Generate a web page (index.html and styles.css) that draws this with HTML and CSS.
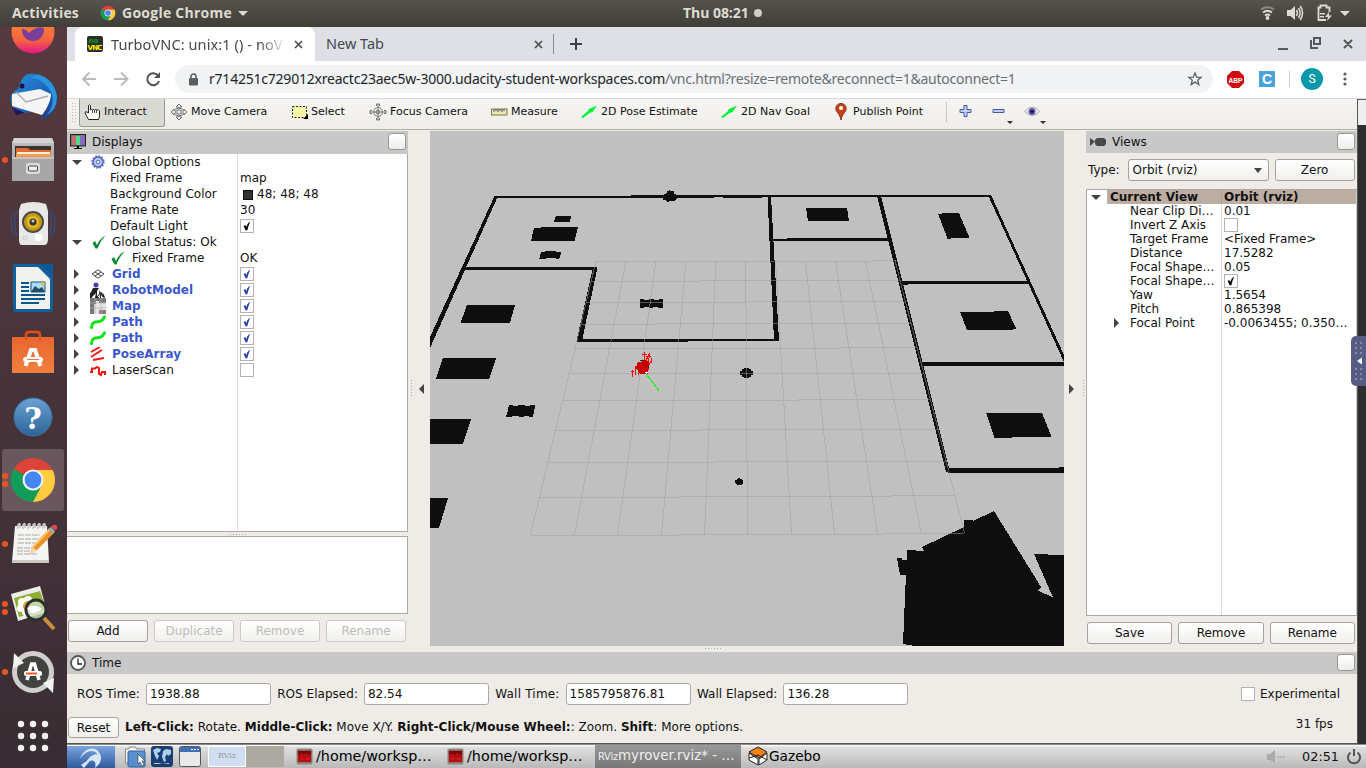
FILE: index.html
```html
<!DOCTYPE html>
<html lang="en">
<head>
<meta charset="utf-8">
<title>TurboVNC: unix:1 () - noVNC</title>
<link rel="stylesheet" href="styles.css">
</head>
<body>
<svg class="defs" width="0" height="0">
  <defs>
    <linearGradient id="gGrey" x1="0" y1="0" x2="0" y2="1"><stop offset="0" stop-color="#c4c4c4"/><stop offset="1" stop-color="#8d8d8d"/></linearGradient>
    <linearGradient id="gOrange" x1="0" y1="0" x2="0" y2="1"><stop offset="0" stop-color="#e9662f"/><stop offset="1" stop-color="#f08040"/></linearGradient>
    <linearGradient id="gBlue" x1="0" y1="0" x2="0" y2="1"><stop offset="0" stop-color="#6ba3d6"/><stop offset="1" stop-color="#2d6396"/></linearGradient>
    <linearGradient id="gFire" x1="0" y1="0" x2="0" y2="1"><stop offset="0" stop-color="#ff9a30"/><stop offset=".7" stop-color="#f5623f"/><stop offset="1" stop-color="#e3148c"/></linearGradient>
    <linearGradient id="gBird" x1="0" y1="0" x2="1" y2="1"><stop offset="0" stop-color="#2a8fe0"/><stop offset=".6" stop-color="#1a62b8"/><stop offset="1" stop-color="#1f2f80"/></linearGradient>
    <symbol id="chrome" viewBox="0 0 48 48">
      <circle cx="24" cy="24" r="22" fill="#dd4437"/>
      <path d="M24 24 L4.9 13 A22 22 0 0 0 24 46 L33.5 29.5Z" fill="#119d58"/>
      <path d="M24 14 H43.6 A22 22 0 0 1 24 46 L33 29Z" fill="#fecd40"/>
      <circle cx="24" cy="24" r="10.5" fill="#f1f1f1"/><circle cx="24" cy="24" r="8.4" fill="#4486f4"/>
    </symbol>
    <symbol id="arrow3d" viewBox="0 0 16 16"><path d="M0 13 L6.500 7.500 L8 5 L16 1.500 L11.500 8 L8.500 9 L2 14Z" fill="#00f03c"/></symbol>
    <symbol id="check" viewBox="0 0 14 14"><path d="M3 6.800 L5 6 L6.200 8 C7 5.500 8.500 2.500 10.800 2 C9.300 5 8 8.500 7.500 12 L5.300 12Z" fill="currentColor"/></symbol>
    <symbol id="tick" viewBox="0 0 14 14"><path d="M.5 8 L3 6 L5 10 C7 5.500 10 2 13.500 .5 C10 4.500 7 9 5.500 13.500 L3.500 13.500Z" fill="#0b8a2f"/></symbol>
    <symbol id="path" viewBox="0 0 16 14"><path d="M1.500 12.500 C1.500 8 4 7 7.500 6.800 C11 6.500 13 5 14.500 1.800" fill="none" stroke="#0be31b" stroke-width="3" stroke-linecap="round"/></symbol>
    <symbol id="term" viewBox="0 0 18 18"><rect x=".5" y=".5" width="17" height="17" rx="2" fill="#8c8783"/><rect x="2" y="3" width="14" height="12" fill="#b80d10"/><path d="M2 3h14v4H2z" fill="#7c0508"/><path d="M5 6h2v1H5zM10 6h2v1h-2zM5 11h2v1H5zM11 11h3v1h-3z" fill="#f04840"/></symbol>
  </defs>
</svg>

<header class="topbar">
  <span class="activities">Activities</span>
  <svg class="tb-chrome" width="16" height="16"><use href="#chrome"/></svg>
  <span class="appname">Google Chrome</span>
  <i class="caret light"></i>
  <span class="clock">Thu 08:21</span><i class="clockdot"></i>
  <svg class="tray" width="100" height="26" viewBox="0 0 100 26">
    <g fill="none" stroke="#8a8984" stroke-width="2"><path d="M1 9.500 Q7.500 5 14 9.500"/></g>
    <g fill="none" stroke="#dfdbd2" stroke-width="2"><path d="M3 12.500 Q7.500 9 12 12.500"/><path d="M5 15.500 Q7.500 13.500 10 15.500"/></g>
    <circle cx="7.500" cy="18" r="1.900" fill="#dfdbd2"/>
    <path d="M27 10h3.500l4.500-4v14l-4.500-4H27z" fill="#dfdbd2"/>
    <g fill="none" stroke="#dfdbd2" stroke-width="1.500"><path d="M36.500 10q2 3 0 6M38.500 8q3.300 5 0 10M40.300 6q4.500 7 0 14"/></g>
    <path d="M66 20h-7.500V7.500h2v-2h6v2h3V12" fill="none" stroke="#dfdbd2" stroke-width="1.800"/>
    <path d="M60 13h5v1.500h-5zM60 16h4v1.500h-4zM69 12l-4 5h3l-1 4 5-5.500h-3z" fill="#dfdbd2"/>
    <path d="M80 11h10l-5 5z" fill="#dfdbd2"/>
  </svg>
</header>

<div class="desktop">
<nav class="dock">
  <div class="slot"><svg width="48" height="48"><circle cx="24" cy="24" r="21.500" fill="url(#gFire)"/><circle cx="24" cy="22" r="11" fill="#7b3f9a"/><path d="M11 20q6 1 9 5q8-8 15-5l2-8H10z" fill="#f7753c"/></svg></div>
  <div class="slot"><svg width="48" height="48"><path d="M9 17C12 6 17 1 21 2C35 0 47 12 48 24C48 38 40 47 31 47L38 38L8 42C-2 28 1 21 9 17Z" fill="url(#gBird)"/><path d="M20 5q16 2 23 17q3 10-5 21q10-5 10-18Q45 7 30 3z" fill="#2796dc"/><path d="M3 35l4 8 9-2z" fill="#2a1254"/><path d="M3 22L31 17L42 22C42 28 38 37 33 43L3 34Z" fill="#f5f5f5"/><path d="M7 20l10 10 22-6" fill="none" stroke="#aaa" stroke-width="1.300"/><circle cx="13" cy="14" r="2.500" fill="#214"/></svg></div>
  <div class="slot"><i class="pip"></i><svg width="48" height="48"><path d="M5 2h38l2 5v37q0 1-1 1H4q-1 0-1-1V7z" fill="url(#gGrey)"/><path d="M3 7l2-5h38l2 5z" fill="#d2d2d2"/><path d="M6 10h36v11H6z" fill="#3c3531"/><path d="M7 12h12l2 2h21v8H7z" fill="#e4682a"/><path d="M8 16h33v5H8z" fill="#fff2d8"/><path d="M7 18h35v4H7z" fill="#f39b52"/><path d="M3 21h42v24H3z" fill="#a6a6a6"/><path d="M3 21h42v2H3z" fill="#c4c4c4"/><rect x="17" y="27" width="14" height="11" rx="2.500" fill="#dcdcdc"/><rect x="19.500" y="30" width="9" height="5" rx="1" fill="#eee" stroke="#444"/></svg></div>
  <div class="slot"><svg width="48" height="48"><g fill="none" stroke="#3d4a74"><path d="M5 11q-6 12 0 25M8 11q-5 12 0 25M43 11q6 12 0 25M40 11q5 12 0 25" stroke-width="1.500"/></g><path d="M12 4q12-4 25 0l2 7v28q0 5-3 6H13q-3 0-3-6V10z" fill="#e8e8e6"/><circle cx="24" cy="22" r="11" fill="#4b4b4b"/><circle cx="24" cy="22" r="9" fill="#c59a12"/><circle cx="24" cy="22" r="6" fill="#e4bd28"/><circle cx="24" cy="22" r="3.500" fill="#333"/><circle cx="24" cy="21" r="1.500" fill="#ccc"/><path d="M26 34h7v6q-5 2-7 0z" fill="#fff"/><circle cx="16" cy="38" r="2" fill="none" stroke="#ccc"/></svg></div>
  <div class="slot"><svg width="48" height="48"><path d="M6 0H32L44 12V45q0 3-3 3H7q-3 0-3-3V2q0-2 2-2z" fill="#0f609c"/><path d="M32 0h12v12z" fill="#0a5a98"/><path d="M7 3H29L41 15V45H7z" fill="#f1f1ef"/><path d="M12 19h8M12 23h8M12 27h8M12 31h24M12 35h24M12 39h18" stroke="#0b5788" stroke-width="2"/><path d="M22 18h14v10H22z" fill="#a8dbf5" stroke="#0b5788"/><path d="M22 28l4-6 4 3 3-2 3 5z" fill="#274d66"/><circle cx="34" cy="20" r="2" fill="#e7c04a"/></svg></div>
  <div class="slot"><svg width="48" height="48"><path d="M17 14V7q0-3 3-3h8q3 0 3 3v7" fill="none" stroke="#ba3d12" stroke-width="3"/><path d="M3 9h42v36H3z" fill="url(#gOrange)"/><path d="M17 12V7q0-3 3-3h8q3 0 3 3v5" fill="none" stroke="#d8511e" stroke-width="2"/><path d="M16.500 38L22 22h4l5.500 16" fill="none" stroke="#fff" stroke-width="4"/><rect x="14" y="29" width="20" height="5" rx="2.500" fill="#fff"/><path d="M18 31.500h12" stroke="#ee7136"/></svg></div>
  <div class="slot"><svg width="48" height="48"><circle cx="24" cy="25" r="19" fill="url(#gBlue)" stroke="#3b72a4"/><text x="24" y="37" text-anchor="middle" class="help-q">?</text></svg></div>
  <div class="slot on"><i class="pip"></i><i class="pip"></i><svg width="48" height="48"><use href="#chrome"/></svg></div>
  <div class="slot"><i class="pip"></i><svg width="48" height="48"><path d="M6 6h32l2 36H3z" fill="#f4f4f2"/><path d="M3 40h37v3H3z" fill="#c9c9be"/><g fill="none" stroke="#ccc" stroke-width="1.700"><path d="M9 9V5q2-3 2 0v3M14 9V5q2-3 2 0v3M19 9V5q2-3 2 0v3M24 9V5q2-3 2 0v3M29 9V5q2-3 2 0v3M34 9V5q2-3 2 0v3"/></g><path d="M9 15h22M9 19h22M9 23h20M8 28h17M8 31h13M8 34h20" stroke="#a9a9a9" stroke-dasharray="6 1"/><path d="M21 34l3-8L41 8l5 4-18 18z" fill="#e9912b"/><path d="M24 27L41 9" stroke="#ffc46a" stroke-width="2"/><path d="M39 9l3-2 4 4-3 3z" fill="#9aa"/><path d="M42 7q3-4 6-1q1 3-2 4z" fill="#e5484d"/><path d="M21 34l3-7 4 4z" fill="#f7d7a8"/></svg></div>
  <div class="slot"><i class="pip"></i><i class="pip"></i><svg width="48" height="48"><path d="M2 10L31 2L38 28L9 37Z" fill="#ededea"/><path d="M5 14L31 7L37 25L10 33Z" fill="#8bb034"/><g fill="#fff"><circle cx="13" cy="18" r="4"/><circle cx="19" cy="16" r="4"/><circle cx="12" cy="24" r="4"/><circle cx="17" cy="28" r="4"/></g><circle cx="19" cy="22" r="5" fill="#eda22e"/><circle cx="27" cy="26" r="10" fill="#cddfba" fill-opacity=".8" stroke="#2c3130" stroke-width="3"/><path d="M18 24q8-5 15 1q-7 5-11 4z" fill="#fff"/><path d="M35 34l10 11" stroke="#cf8e3d" stroke-width="4"/></svg></div>
  <div class="slot"><i class="pip"></i><svg width="48" height="48"><circle cx="24" cy="24" r="18.500" fill="#42423e" stroke="#cfcfcf" stroke-width="5"/><path d="M5 5l-1 15 11-5zM44 45l1-15-11 5z" fill="#f2f2f2"/><path d="M18 32L22.500 16h3L30 32" fill="none" stroke="#fff" stroke-width="3.500"/><rect x="15" y="23" width="18" height="5" rx="2" fill="#fff"/><path d="M17 25.500h11" stroke="#ef5a20" stroke-width="2"/></svg></div>
  <div class="slot"><svg width="48" height="48" fill="#f4f2f3"><g id="dots"><circle cx="12" cy="12" r="3.200"/><circle cx="24" cy="12" r="3.200"/><circle cx="36" cy="12" r="3.200"/></g><use href="#dots" y="12"/><use href="#dots" y="24"/></svg></div>
</nav>

<main class="screen">
  <div class="tabs">
    <div class="tab active">
      <svg width="16" height="16"><rect width="16" height="16" rx="2" fill="#2b2f2b"/><text x="1.500" y="7" class="no">no</text><text x=".5" y="14" class="vnc" textLength="15">VNC</text></svg>
      <span class="tabtitle">TurboVNC: unix:1 () - noV</span>
      <svg class="x1" width="9" height="9"><path d="M1 1l7 7M8 1L1 8" stroke="#4a4d51" stroke-width="1.700"/></svg>
    </div>
    <div class="tab second"><span>New Tab</span><svg width="9" height="9"><path d="M1 1l7 7M8 1L1 8" stroke="#4a4d51" stroke-width="1.700"/></svg></div>
    <svg class="plus" width="12" height="12"><path d="M6 0v12M0 6h12" stroke="#3b3e42" stroke-width="2"/></svg>
    <svg class="winctl" width="80" height="16" fill="none" stroke="#54575c" stroke-width="2"><path d="M1 13h10M34 4v8h7M37 2h6v6h-6zM67 4l8 8M75 4l-8 8"/></svg>
  </div>
  <div class="navbar">
    <svg class="navicons" width="80" height="20" fill="none" stroke="#b8babd" stroke-width="1.800"><path d="M14 10H1.500M7.500 3.500L1 10l6.500 6.500"/><path d="M32 10h13M39 3.500l6.500 6.500-6.500 6.500"/><path d="M76 6.500A6 6 0 1 0 77 12" stroke="#505357" stroke-width="2"/><path d="M78 3v6h-6z" fill="#505357" stroke="none"/></svg>
    <div class="omni">
      <svg width="10" height="13"><rect x="0" y="5" width="9" height="7.500" rx="1" fill="#5b5f63"/><path d="M2 6V3.500a2.500 2.500 0 0 1 5 0V6" fill="none" stroke="#5b5f63" stroke-width="1.500"/></svg>
      <span class="url"><b>r714251c729012xreactc23aec5w-3000.udacity-student-workspaces.com</b><span>/vnc.html?resize=remote&amp;reconnect=1&amp;autoconnect=1</span></span>
      <svg class="star" width="16" height="16"><path d="M8 2l1.700 4.100 4.400.3-3.400 2.800 1.100 4.300L8 11.100l-3.800 2.400 1.100-4.300-3.400-2.800 4.400-.3z" fill="none" stroke="#5b5f63" stroke-width="1.300"/></svg>
    </div>
    <svg class="abp" width="17" height="17"><path d="M5 0h7l5 5v7l-5 5H5l-5-5V5z" fill="#cf0a0d"/><text x="8.500" y="11.500" text-anchor="middle" class="abpt" textLength="14" lengthAdjust="spacingAndGlyphs">ABP</text></svg>
    <span class="cext">C</span><i class="vsep"></i><span class="avatar">S</span>
    <svg class="menu" width="4" height="14" fill="#5b5f63"><circle cx="2" cy="2" r="1.600"/><circle cx="2" cy="7" r="1.600"/><circle cx="2" cy="12" r="1.600"/></svg>
  </div>

  <div class="remote">
    <div class="rviz">
      <div class="toolbar">
        <i class="grip"></i>
        <div class="tool interact"><svg width="16" height="18" fill="#fff" stroke="#222"><path d="M4.500 10V2.500q1-1.500 2 0V7q1-1 2 0q1-1 2 0q1-1 2 0q2-1 3 1v5l-1 3.500H4.500L1 10q0-2 2-1z"/><path d="M8.500 7v3M10.500 7v3M12.500 7v3" stroke-width=".8"/></svg>Interact</div>
        <div class="tool mv"><svg width="18" height="18" viewBox="0 0 18 18" fill="#eee" stroke="#777"><path d="M9 1l3 3h-2v4h4V6l3 3-3 3v-2h-4v4h2l-3 3-3-3h2v-4H4v2L1 9l3-3v2h4V4H6z"/><path d="M4.500 6.500q4.500-3 9 0M4.500 11.500q4.500 3 9 0" fill="none"/></svg>Move Camera</div>
        <div class="tool sel"><svg width="18" height="14"><rect x="1.500" y="1.500" width="14" height="11" fill="#f4f8a2" stroke="#222" stroke-dasharray="2 1.500"/><path d="M17 9v5h-5z"/></svg>Select</div>
        <div class="tool foc"><svg width="18" height="18" fill="none" stroke="#777"><circle cx="9" cy="9" r="4.500"/><circle cx="9" cy="9" r="2"/><path d="M9 1v16M1 9h16M7.500 3V1h3v2M7.500 15v2h3v-2M3 7.500H1v3h2M15 7.500h2v3h-2"/></svg>Focus Camera</div>
        <div class="tool mea"><svg width="17" height="8"><rect x=".5" y="1" width="15.500" height="6" fill="#ebe9a6" stroke="#77775e"/><path d="M3 1v3M5 1v2M7 1v3M9 1v2M11 1v3M13 1v2" stroke="#555"/></svg>Measure</div>
        <div class="tool pose"><svg width="16" height="16"><use href="#arrow3d"/></svg>2D Pose Estimate</div>
        <div class="tool goal"><svg width="16" height="16"><use href="#arrow3d"/></svg>2D Nav Goal</div>
        <div class="tool pub"><svg width="12" height="18"><path d="M6 17C5 11 .8 9 .8 5.500a5.200 5 0 0 1 10.400 0C11.200 9 7 11 6 17z" fill="#c94217" stroke="#7e3a20"/><circle cx="6" cy="5" r="2" fill="#fff"/></svg>Publish Point</div>
        <i class="tsep"></i>
        <svg class="zoomers" width="86" height="26" viewBox="0 0 86 26"><path d="M5 3.500h3v4h4v3H8v4H5v-4H1v-3h4z" fill="#c3d0f5" stroke="#4658a8"/><path d="M34 7.500h11v3H34z" fill="#c3d0f5" stroke="#4658a8"/><path d="M48 19h6l-3 3zM81 19h6l-3 3z" fill="#333"/><path d="M65.500 9.500q8-9 15 0q-7 8-15 0z" fill="#eee" stroke="#aaa"/><circle cx="73" cy="9.500" r="3.500" fill="#6152b8"/><circle cx="73" cy="9.500" r="1.500" fill="#111"/></svg>
      </div>

      <div class="work">
        <section class="displays">
          <div class="phead"><svg width="16" height="17"><rect x=".5" y=".5" width="15" height="11.500" fill="#777" stroke="#222"/><path d="M2 2h4v9H2z" fill="#c76b73"/><path d="M6 2h4v9H6z" fill="#55d987"/><path d="M10 2h4v9h-4z" fill="#8a66c9"/><path d="M7 12h2v2h3v1H4v-1h3z"/></svg>Displays<i class="pbtn"></i></div>
          <div class="tree">
            <div class="row"><span><i class="dn"></i><svg class="ic" width="14" height="14"><circle cx="7" cy="7" r="5" fill="#b9c8f2" stroke="#5267b9" stroke-width="1.500"/><circle cx="7" cy="7" r="6" fill="none" stroke="#5267b9" stroke-width="1.500" stroke-dasharray="1.600 1.500"/><circle cx="7" cy="7" r="1.800" fill="#fff" stroke="#5267b9"/></svg>Global Options</span><span></span></div>
            <div class="row"><span class="p1">Fixed Frame</span><span>map</span></div>
            <div class="row"><span class="p1">Background Color</span><span><i class="sw"></i>48; 48; 48</span></div>
            <div class="row"><span class="p1">Frame Rate</span><span>30</span></div>
            <div class="row"><span class="p1">Default Light</span><span><i class="cb blk"><svg width="12" height="12"><use href="#check"/></svg></i></span></div>
            <div class="row"><span><i class="dn"></i><svg class="ic" width="14" height="14"><use href="#tick"/></svg>Global Status: Ok</span><span></span></div>
            <div class="row"><span class="p2"><svg class="ic" width="14" height="14"><use href="#tick"/></svg>Fixed Frame</span><span>OK</span></div>
            <div class="row bl"><span><i class="rt"></i><svg class="ic" width="14" height="10" viewBox="0 0 14 10" fill="none" stroke="#444"><path d="M7 .8L13 5 7 9.200 1 5zM4 2.900l6 4.200M10 2.900L4 7.100"/></svg>Grid</span><span><i class="cb"><svg width="12" height="12"><use href="#check"/></svg></i></span></div>
            <div class="row bl"><span><i class="rt"></i><svg class="ic" width="16" height="16"><circle cx="6" cy="3" r="2.500" fill="#4f3ea0"/><path d="M3 6h6l-2 3v6h2v1H5l1-5-4 4-2-3zM0 11h2v5H0zM9 8l2 4v4h-1zM13 11l2 4-1 1-3-3z" fill="#222"/><path d="M7 15l4-5 2 5" fill="none" stroke="#222"/></svg>RobotModel</span><span><i class="cb"><svg width="12" height="12"><use href="#check"/></svg></i></span></div>
            <div class="row bl"><span><i class="rt"></i><svg class="ic" width="16" height="16"><rect width="16" height="16" fill="#e6e6e6"/><path d="M0 0h6v6H4v10H0zM6 0h10v5H9V3H6z" fill="#777"/><path d="M9 12h7v4H9z" fill="#8c7886"/><path d="M0 5h16M0 10h16M5 0v16M11 0v16" stroke="#aaa" stroke-width=".7"/></svg>Map</span><span><i class="cb"><svg width="12" height="12"><use href="#check"/></svg></i></span></div>
            <div class="row bl"><span><i class="rt"></i><svg class="ic" width="16" height="14"><use href="#path"/></svg>Path</span><span><i class="cb"><svg width="12" height="12"><use href="#check"/></svg></i></span></div>
            <div class="row bl"><span><i class="rt"></i><svg class="ic" width="16" height="14"><use href="#path"/></svg>Path</span><span><i class="cb"><svg width="12" height="12"><use href="#check"/></svg></i></span></div>
            <div class="row bl"><span><i class="rt"></i><svg class="ic" width="16" height="14" stroke="#f3150f" stroke-width="1.800"><path d="M1 5l9-5M1 10l11-7M3 13l11-2"/></svg>PoseArray</span><span><i class="cb"><svg width="12" height="12"><use href="#check"/></svg></i></span></div>
            <div class="row"><span><i class="rt"></i><svg class="ic" width="16" height="14"><path d="M0 9h2V5.500h3l2-1.500 2 1v6l2 1 1-3h3v3" fill="none" stroke="#f3150f" stroke-width="2"/></svg>LaserScan</span><span><i class="cb"></i></span></div>
          </div>
          <i class="hgrip"></i>
          <div class="desc"></div>
          <div class="btns"><span class="btn">Add</span><span class="btn off">Duplicate</span><span class="btn off">Remove</span><span class="btn off">Rename</span></div>
        </section>
        <div class="gut"><i class="vg"></i><i class="la"></i></div>
        <svg class="view" width="634" height="515" viewBox="430 131 634 515" shape-rendering="crispEdges">
          <rect x="430" y="131" width="634" height="515" fill="#c0c0c0"/>
          <g fill="#0e0e0e">
            <path d="M494.500 196h3.500L430 348v-11zM494 196h137v2H494zM631 195h360v2h-9v0h-271v.5h-80z"/>
            <path d="M494 196h220v2H494zM723 196h39v1.500h-39z"/>
            <path d="M767.500 196h3.500l8 144.500h-5zM577 338.700h201.500v2H688v1H577zM593 267h4.500l-15.500 74h-5.500zM464 267h133v3H464z"/>
            <path d="M772 239h15v-1h103v3H772zM877 196h4l69 276h-4zM900 281h130v3h-122v1h-8zM921 362h143v4H921zM948 468h111v-1h5v6H948zM988 195h3l73 160v7z"/>
            <path d="M556 216h15l-1 6h-16zM534 228l14-1h30l-3.500 14H531zM541 252h4v-1h11v1h5.500l-2 6.500h-4v-1h-10v1h-6zM467 305h48l-5 17.500-7 .5h-42.500zM443 358h53l-6.500 20.500H436zM430 419h41l-8 25h-33zM430 498h18l-9 30h-9z"/>
            <path d="M509 405h4v1h5v-1h7v1h5v-1h5v2l-2 10h-4v-1h-5v1h-5v-1h-7v1h-6v-2h1z"/>
            <path d="M640 299h4v1h5v-1h5v1h5v-1h4v9h-5v-1h-5v1h-4v-1h-5v1h-4zM664 194l3-1v-2l3-1v1h4v3l3 1v3l-3 3h-4l-3 1-1-2h-3zM742 369h2v-1h5v1h2v2h2v4h-2v2h-2v1h-5v-1h-2v-2h-2v-4h2zM735 480l3-1v-1h2v1l3 1v3l-2 2h-4l-2-2z"/>
            <path d="M806 208h41l2 13h-41zM938 214l7-1h14l10.500 24.500h-19v1h-3zM960 312h34v-1h14l8 17.500-5 1.500h-44zM986 413h56l9.500 23.500H1012v1h-17.500z"/>
            <path d="M903 644L906 573v2h-6l-3-17h5v2h5v-10h9v1h8l-2-4 42-20v-7h9v1l21-10L1041 587l-3 3.500 15 7L1034 554h14v1h16v91H915l-12-2z"/>
          </g>
          <g fill="none" stroke="#a0a0a4" stroke-opacity=".5" shape-rendering="crispEdges">
            <path d="M596 261.500h276v-1h24M591 281.500h108v-1h201M586 302.500h160v-1h159M580 324.500h75v-1h256M575 348.500h264v-1h78M569 373.500h354M563 400.500h235v-1h132M555 430.500h146v-1h237M548 462.500h166v-1h232M539 497.500h140v-1h212v-1h64M531 535.500h148v-1h203v-1h82"/>
            <path d="M596 261L530.500 535M626 261L574.500 535M656 261L617.500 535M686 261L661.500 535M715.800 261L704.500 535M745.700 261L747.500 535M775.500 261L791.500 534M805.500 261L834.600 534M835.500 261L877.700 534M865.500 261L921.300 533M895 260.500L964.500 533"/>
          </g>
          <g fill="none" stroke="#f00"><path d="M642 354.500h5M644.500 352v9M649 354l-4 9M635.500 366v9M638.500 362v13M632.500 370v7M631 371.500h3M648.500 358v12M651 361l-5 10M646 356.500h5M640 363.500h9M636 367l6 4M649.500 353v5M651.500 358v5M642 373.500h6"/></g>
          <path d="M638 362h3l2-2h3l3 3-1 8-3 3h-5l-4-6z" fill="#c80000"/><path d="M640 360h3v1h-3zM649 364v4h-1zM647 372h1v2h-1z" fill="#222"/><path d="M645 372h3l-2 2z" fill="#fff"/>
          <path d="M646 374l5 6 8 11" fill="none" stroke="#0f0"/>
        </svg>
        <div class="gut right"><i class="ra"></i><i class="vg"></i></div>
        <section class="views">
          <div class="phead"><svg width="17" height="10" fill="#484848"><path d="M1 1l5 3.500L1 9zM8 1h7l2 2v4l-2 2H8L6 7V3z"/></svg>Views<i class="pbtn"></i></div>
          <div class="typerow">Type:<span class="combo">Orbit (rviz)<i class="caret"></i></span><span class="btn zero">Zero</span></div>
          <div class="vtree">
            <div class="row cur"><span><em class="wht"><i class="dn"></i></em>Current View</span><span>Orbit (rviz)</span></div>
            <div class="row"><span>Near Clip Di…</span><span>0.01</span></div>
            <div class="row"><span>Invert Z Axis</span><span><i class="cb"></i></span></div>
            <div class="row"><span>Target Frame</span><span>&lt;Fixed Frame&gt;</span></div>
            <div class="row"><span>Distance</span><span>17.5282</span></div>
            <div class="row"><span>Focal Shape…</span><span>0.05</span></div>
            <div class="row"><span>Focal Shape…</span><span><i class="cb blk"><svg width="12" height="12"><use href="#check"/></svg></i></span></div>
            <div class="row"><span>Yaw</span><span>1.5654</span></div>
            <div class="row"><span>Pitch</span><span>0.865398</span></div>
            <div class="row fp"><span><i class="rt"></i>Focal Point</span><span>-0.0063455; 0.350…</span></div>
          </div>
          <div class="btns vb"><span class="btn">Save</span><span class="btn">Remove</span><span class="btn">Rename</span></div>
        </section>
      </div>
      <i class="hgrip mid"></i>
      <div class="phead time"><svg width="16" height="16"><circle cx="8" cy="8" r="7" fill="#fff" stroke="#555" stroke-width="1.800"/><path d="M8 3.500V9h4" fill="none" stroke="#222" stroke-width="1.300"/></svg>Time<i class="pbtn"></i></div>
      <div class="fields"><label>ROS Time:</label><span class="f">1938.88</span><label>ROS Elapsed:</label><span class="f">82.54</span><label class="wt">Wall Time:</label><span class="f">1585795876.81</span><label>Wall Elapsed:</label><span class="f">136.28</span><span class="exp"><i class="cb"></i>Experimental</span></div>
      <div class="status"><span class="btn reset">Reset</span><p><b>Left-Click:</b> Rotate. <b>Middle-Click:</b> Move X/Y. <b>Right-Click/Mouse Wheel:</b>: Zoom. <b>Shift</b>: More options.</p><span class="fps">31 fps</span></div>
    </div>
    <div class="strip"></div>
    <svg class="handle" width="15" height="50"><rect width="24" height="50" rx="5" fill="#565d85"/><g stroke="#858baa" stroke-width="2" stroke-dasharray="2 3"><path d="M4 7h9M4 12h9M4 17h9M4 33h9M4 38h9M4 43h9"/></g><path d="M11 21.500v7l-5-3.500z" fill="#fff"/></svg>
  </div>

  <div class="taskbar">
    <svg class="start" width="48" height="22"><path d="M13 13C16 1 30-1 33 8C36 14 32 19 28 22C30 15 26 12 19 17C22 9 30 7 31 9C27 2 18 5 13 13zM14 19L27 10L17 22z" fill="#d5e8fb"/></svg>
    <svg class="q1" width="80" height="22"><path d="M1.500 3h3l1-2h6l1 2h8v14H1.500z" fill="#f2f3f3" stroke="#888"/><rect x="4" y="5" width="17" height="16" rx="1.500" fill="#5890cf" stroke="#36639e"/><path d="M14 8v10l2-2 2 4 2-1-2-4h3z" fill="#fff" stroke="#444" stroke-width=".7"/><rect x="27" y="0" width="22" height="21" rx="3" fill="#1c3e73"/><path d="M29 4l4-2 4 1-1 3-3 1 2 3-2 4-2-4zM39 5l3-2 5 1v4l-3 2-1-2-2 3 1 4-2 1-2-5zM30 17h5l3 1 7-1v1H30z" fill="#a8d3ec"/><rect x="55.500" y=".5" width="21" height="20" rx="2" fill="#e9e9e9" stroke="#555"/><path d="M56 1h20v5H56z" fill="#3d70b7"/><path d="M67 3.500h2M70 3.500h2M73 3.500h2" stroke="#fff"/></svg>
    <div class="pager"><span>RViz</span><span></span></div>
    <div class="task t1"><svg width="17" height="17" viewBox="0 0 18 18"><use href="#term" width="18" height="18"/></svg><span>/home/worksp…</span></div>
    <div class="task t2"><svg width="17" height="17" viewBox="0 0 18 18"><use href="#term" width="18" height="18"/></svg><span>/home/worksp…</span></div>
    <div class="task t3"><em>RViz</em><span>myrover.rviz* - …</span></div>
    <div class="task t4"><svg width="20" height="20" stroke="#222"><path d="M10 1l9 5-8 6-10-6z" fill="#f58113"/><path d="M1 7l9 6v6l-9-5zM11 13l8-6v7l-8 5z" fill="#fff"/><path d="M1 12l9-3 9 5" fill="none"/></svg><span>Gazebo</span></div>
    <svg class="mute" width="24" height="14"><path d="M2 4h3l5-4v13L5 10H2z" fill="#aaa"/><path d="M12 7h2M15 7h2M18 7h2" stroke="#aaa" stroke-width="1.500"/></svg>
    <span class="tclock">02:51</span>
    <svg class="power" width="16" height="16" fill="none" stroke="#555" stroke-width="2"><path d="M4.500 3.500a6 6 0 1 0 7 0M8 0v7"/></svg>
  </div>
</main>
</div>
</body>
</html>
```
FILE: styles.css
```css
*{box-sizing:border-box}
body{margin:0;width:1366px;height:768px;overflow:hidden;background:#46333a;font:12px/16px "DejaVu Sans",sans-serif;color:#111;display:flex;flex-direction:column}
i,em{font-style:normal}
svg{display:block;flex:none}
.defs{position:absolute}
.topbar{height:27px;flex:none;display:flex;align-items:center;background:linear-gradient(#55534b,#403e39);color:#dfdbd2;font:bold 14px/26px "Open Sans","Noto Sans",sans-serif;padding-bottom:1px}
.activities{width:69px;margin-left:12px;letter-spacing:.2px}
.tb-chrome{margin-left:19px}
.appname{width:111px;margin-left:6px;letter-spacing:.25px;white-space:nowrap}
.caret{width:0;height:0;border:5px solid transparent;border-top-color:#444;border-bottom:0}
.caret.light{border-top-color:#dfdbd2;margin-left:5px}
.clock{margin-left:435px;width:67px;letter-spacing:-.05px;white-space:nowrap}
.clockdot{width:8px;height:8px;border-radius:4px;background:#d0cec8;margin-left:4px}
.tray{margin-left:auto;margin-right:6px}
.desktop{flex:1;min-height:0;display:flex}
.dock{width:67px;flex:none;overflow:hidden;background:linear-gradient(#573a3f,#47343a 45%,#423038 75%,#372d32)}
.slot{height:64px;padding:0 0 0 9px;display:flex;align-items:center;position:relative}
.slot:first-child{margin-top:-27px}
.slot svg{position:relative}
.slot.on::before{content:"";position:absolute;left:2px;top:1px;width:62px;height:62px;border-radius:3px;background:#6a575d}
.pip{position:absolute;left:2px;top:29px;width:6px;height:6px;border-radius:3px;background:#e95420}
.pip:has(+.pip){top:25px}
.pip+.pip{top:33px}
.help-q{font:bold 30px "DejaVu Serif",serif;fill:#fff}
.screen{flex:1;min-width:0;display:flex;flex-direction:column}
.tabs{height:34px;flex:none;background:#dee0e5;display:flex;align-items:center}
.tab{height:34px;display:flex;align-items:center;font:14.5px/34px "Noto Sans",sans-serif;color:#45484c}
.tab.active{background:#fff;margin-left:8px;width:240px;border-radius:8px 8px 0 0;padding-left:12px;line-height:33px}
.tab.active .tabtitle{margin-left:8px;width:176px;white-space:nowrap;letter-spacing:.1px;-webkit-mask:linear-gradient(90deg,#000 84%,transparent)}
.x1{margin-left:7px}
.tab.second{width:239px;padding-left:11px;border-right:1px solid #888b90;height:20px;line-height:18px;justify-content:space-between;padding-right:10px}
.tab.second span{padding-bottom:2px}
.no{font:bold 7px "DejaVu Sans",sans-serif;fill:#08a01c}
.vnc{font:bold 7px "DejaVu Sans",sans-serif;fill:#f3f500}
.plus{margin-left:16px}
.winctl{margin-left:auto;margin-right:9px}
.navbar{height:38px;flex:none;background:#fff;border-bottom:1px solid #d6d8de;display:flex;align-items:center;padding-bottom:1px}
.navicons{margin-left:15px}
.omni{margin-left:13px;width:1038px;height:28px;border-radius:14px;background:#f1f3f4;display:flex;align-items:center;padding-left:14px;padding-right:10px}
.url{margin-left:10px;font:14px/28px "Noto Sans",sans-serif;white-space:nowrap;color:#6b6e72;width:806px;display:flex;letter-spacing:-.24px}
.url b{font-weight:400;color:#222428;width:457px;letter-spacing:-.22px}
.star{margin-left:auto}
.abp{margin-left:14px}
.abpt{font:bold 8px "Liberation Sans",sans-serif;fill:#fff}
.cext{margin-left:15px;width:16px;height:16px;background:#4ba3db;color:#fff;font:bold 14px/16px "Liberation Sans",sans-serif;text-align:center}
.vsep{margin-left:14px;width:1px;height:16px;background:#ccced1}
.avatar{margin-left:11px;width:22px;height:22px;border-radius:11px;background:#0b98a9;color:#fff;font:12px/22px "Roboto",sans-serif;text-align:center}
.menu{margin-left:20px}
.remote{height:645px;flex:none;display:flex;position:relative}
.rviz{width:1290px;background:#efece7;display:flex;flex-direction:column;border-bottom:1px solid #555;height:645px}
.strip{width:9px;background:linear-gradient(#efefef 25px,#2e2e2e 25px);border-left:1px solid #555;border-top:1px solid #666}
.handle{position:absolute;right:0;top:237px}
.toolbar{height:31px;flex:none;background:linear-gradient(#f6f5f2,#efede8);border-bottom:1px solid #b2afaa;display:flex;align-items:flex-start;font-size:11px}
.grip{width:5px;height:20px;margin:3px 3px 0 4px;background:radial-gradient(circle,#bbb 1px,transparent 1px) 0 0/3px 3px}
.tool{height:25px;display:flex;align-items:center;white-space:nowrap}
.tool svg{margin-right:4px}
.interact{width:86px;height:28px;padding:0 0 2px 4px;background:#dadad5;border:1px solid #999891;border-top:0;border-radius:0 0 3px 3px}
.mv{margin-left:5px;width:121px}.mv svg{margin-right:3px}
.sel{width:78px}.sel svg{margin-right:2px}
.foc{width:122px}.foc svg{margin-right:3px}
.mea{width:90px}.mea svg{margin-right:3px}
.pose{width:140px}.goal{width:114px}.pub{width:112px}.pub svg{margin-right:6px}
.tsep{width:1px;height:20px;background:#c8c5bf;margin:3px 12px 0 -1px}
.zoomers{margin-top:3px;overflow:visible}
.work{display:flex;margin-top:1px;height:515px;flex:none}
.phead{height:22px;flex:none;background:#c8c8c8;display:flex;align-items:center;padding-left:3px}
.phead svg{margin-right:6px}
.pbtn{margin-left:auto;width:18px;height:17px;background:linear-gradient(#fff,#ededea);border:1px solid #989793;border-radius:3px;margin-right:2px;margin-bottom:1px}
.tree{height:379px;background:linear-gradient(#dcdcdc,#dcdcdc) 170px 0/1px 100% no-repeat #fff;border:1px solid #a9a8a4;border-left:0;border-top-color:#c8c8c8}
.displays{width:341px;flex:none}
.row{height:16px;display:grid;grid-template-columns:173px 1fr;white-space:nowrap}
.row>span{display:flex;align-items:center;padding-left:0}
.tree .row>span:first-child{padding-left:5px}
.tree .row>.p1:first-child,.tree .row>.p2:first-child{padding-left:43px}
.bl>span:first-child{color:#3b57cc;font-weight:bold}
.dn{width:0;height:0;border:5px solid transparent;border-top:5px solid #444;border-bottom:0}
.rt{width:0;height:0;border:5px solid transparent;border-left:5px solid #444;border-right:0;margin:0 13px 0 2px}
.ic{width:16px;margin-right:6px}
.p2 .ic{margin-right:6px}
.tree .rt{margin:0 11px 0 2px}
.tree .dn{margin-right:9px}
.tree .dn+.ic{margin-right:5px}
.sw{width:10px;height:10px;background:#303030;border:1px solid #111;margin:1px 4px 0 3px}
.cb{width:14px;height:14px;background:#fff;border:1px solid #b5b3af;display:block;color:#2a44a8;flex:none}
.cb.blk{color:#000}
.hgrip{display:block;width:17px;height:1px;margin:2px 0 1px 163px;background:repeating-linear-gradient(90deg,#aaa 0 1px,transparent 1px 3px)}
.desc{height:78px;background:#fff;border:1px solid #a9a8a4;border-left:0}
.btns{display:flex;gap:6px;padding:6px 2px 0 1px}
.btn{flex:1;height:22px;border:1px solid #a3a29e;border-radius:3px;background:linear-gradient(#fff,#f0efec);text-align:center;line-height:20px}
.btn.off{color:#bebdbb;border-color:#cbcac7}
.gut{width:22px;flex:none;display:flex;align-items:center}
.gut .vg{width:1px;height:17px;margin-left:3px;background:repeating-linear-gradient(#aaa 0 1px,transparent 1px 3px)}
.la{border:5px solid transparent;border-right:5px solid #444;border-left:0;margin-left:7px}
.ra{border:5px solid transparent;border-left:5px solid #444;border-right:0;margin-left:5px}
.gut.right .vg{margin-left:9px}
.views{width:271px;flex:none}
.typerow{height:36px;display:flex;align-items:center;padding:0 2px 2px 2px}
.combo{margin-left:8px;width:141px;height:22px;border:1px solid #a3a29e;border-radius:3px;background:linear-gradient(#fff,#f0efec);padding:0 6px 0 4px;display:flex;align-items:center;justify-content:space-between}
.combo .caret{border-width:5px 4.5px 0}
.zero{flex:none;width:80px;margin-left:6px}
.vtree{height:427px;background:linear-gradient(#dcdcdc,#dcdcdc) 134px 0/1px 100% no-repeat #fff;border:1px solid #a9a8a4;border-right-color:#ccc}
.vtree .row{height:14px;line-height:14px;grid-template-columns:137px 1fr}
.vtree .row>span:first-child{padding-left:43px}
.vtree .cur{background:linear-gradient(#ada096,#ada096) 134px 0/1px 100% no-repeat #bbada1;font-weight:bold}
.vtree .row.cur>span:first-child{padding:0}
.wht{width:20px;height:14px;background:#fff;display:flex;align-items:center;padding-left:4px;margin-right:3px}
.vtree .row.fp>span:first-child{padding-left:25px}
.vtree .rt{margin-right:11px}
.vb{padding:6px 2px 0 1px}
.hgrip.mid{margin:2px 0 3px 638px;flex:none}
.time{height:22px}
.fields{height:40px;display:flex;align-items:center;padding-left:10px}
.fields label{letter-spacing:.03px}
.fields .wt{letter-spacing:.2px}
.fields .f{width:125px;height:22px;background:#fff;border:1px solid #aaa9a5;border-radius:3px;margin:0 6.3px 0 6px;padding-left:3px;line-height:20px}
.exp{margin-left:auto;display:flex;align-items:center;margin-right:17px}
.exp .cb{margin-right:5px}
.status{display:flex;align-items:center;height:26px;padding-left:1px}
.reset{flex:none;width:51px;height:21px;margin-top:1px}
.status p{margin:0 0 0 6px;letter-spacing:.02px}
.status .fps{margin-left:auto;margin-right:24px;margin-top:-7px}
.taskbar{height:24px;flex:none;background:linear-gradient(#fff,#dfdfdf 10%,#cfcfcf 50%,#b9b9b9);border-top:1px solid #888;display:flex;align-items:center;font-size:14.3px}
.start{background:linear-gradient(#7aa5e0,#2e5a9d);height:22px}
.q1{margin-left:9px}
.pager{margin-left:4px;display:flex;height:21px}
.pager span{width:38px;border:1px solid #fff;background:#d0def2;color:#999;font:8px/18px "DejaVu Serif",serif;text-align:center}
.pager span+span{background:#aca8a2;border:0}
.task{display:flex;align-items:center;white-space:nowrap;height:23px;color:#000;padding-bottom:1px}
.t1{margin-left:12px;width:151px}.t1 span,.t2 span{margin-left:3px}
.t2{width:148px}
.t3{width:146px;background:linear-gradient(#999,#777);color:#eee;padding-left:3px;font-size:13.4px}
.t3 em{font:11px "DejaVu Sans Condensed",sans-serif;letter-spacing:-.2px}
.t4{margin-left:7px;font-size:13.7px}.t4 svg{margin-right:1px}
.mute{margin-left:auto}
.tclock{margin-left:13px;font-size:12.8px}
.power{margin-left:7px;margin-right:4px}
```
